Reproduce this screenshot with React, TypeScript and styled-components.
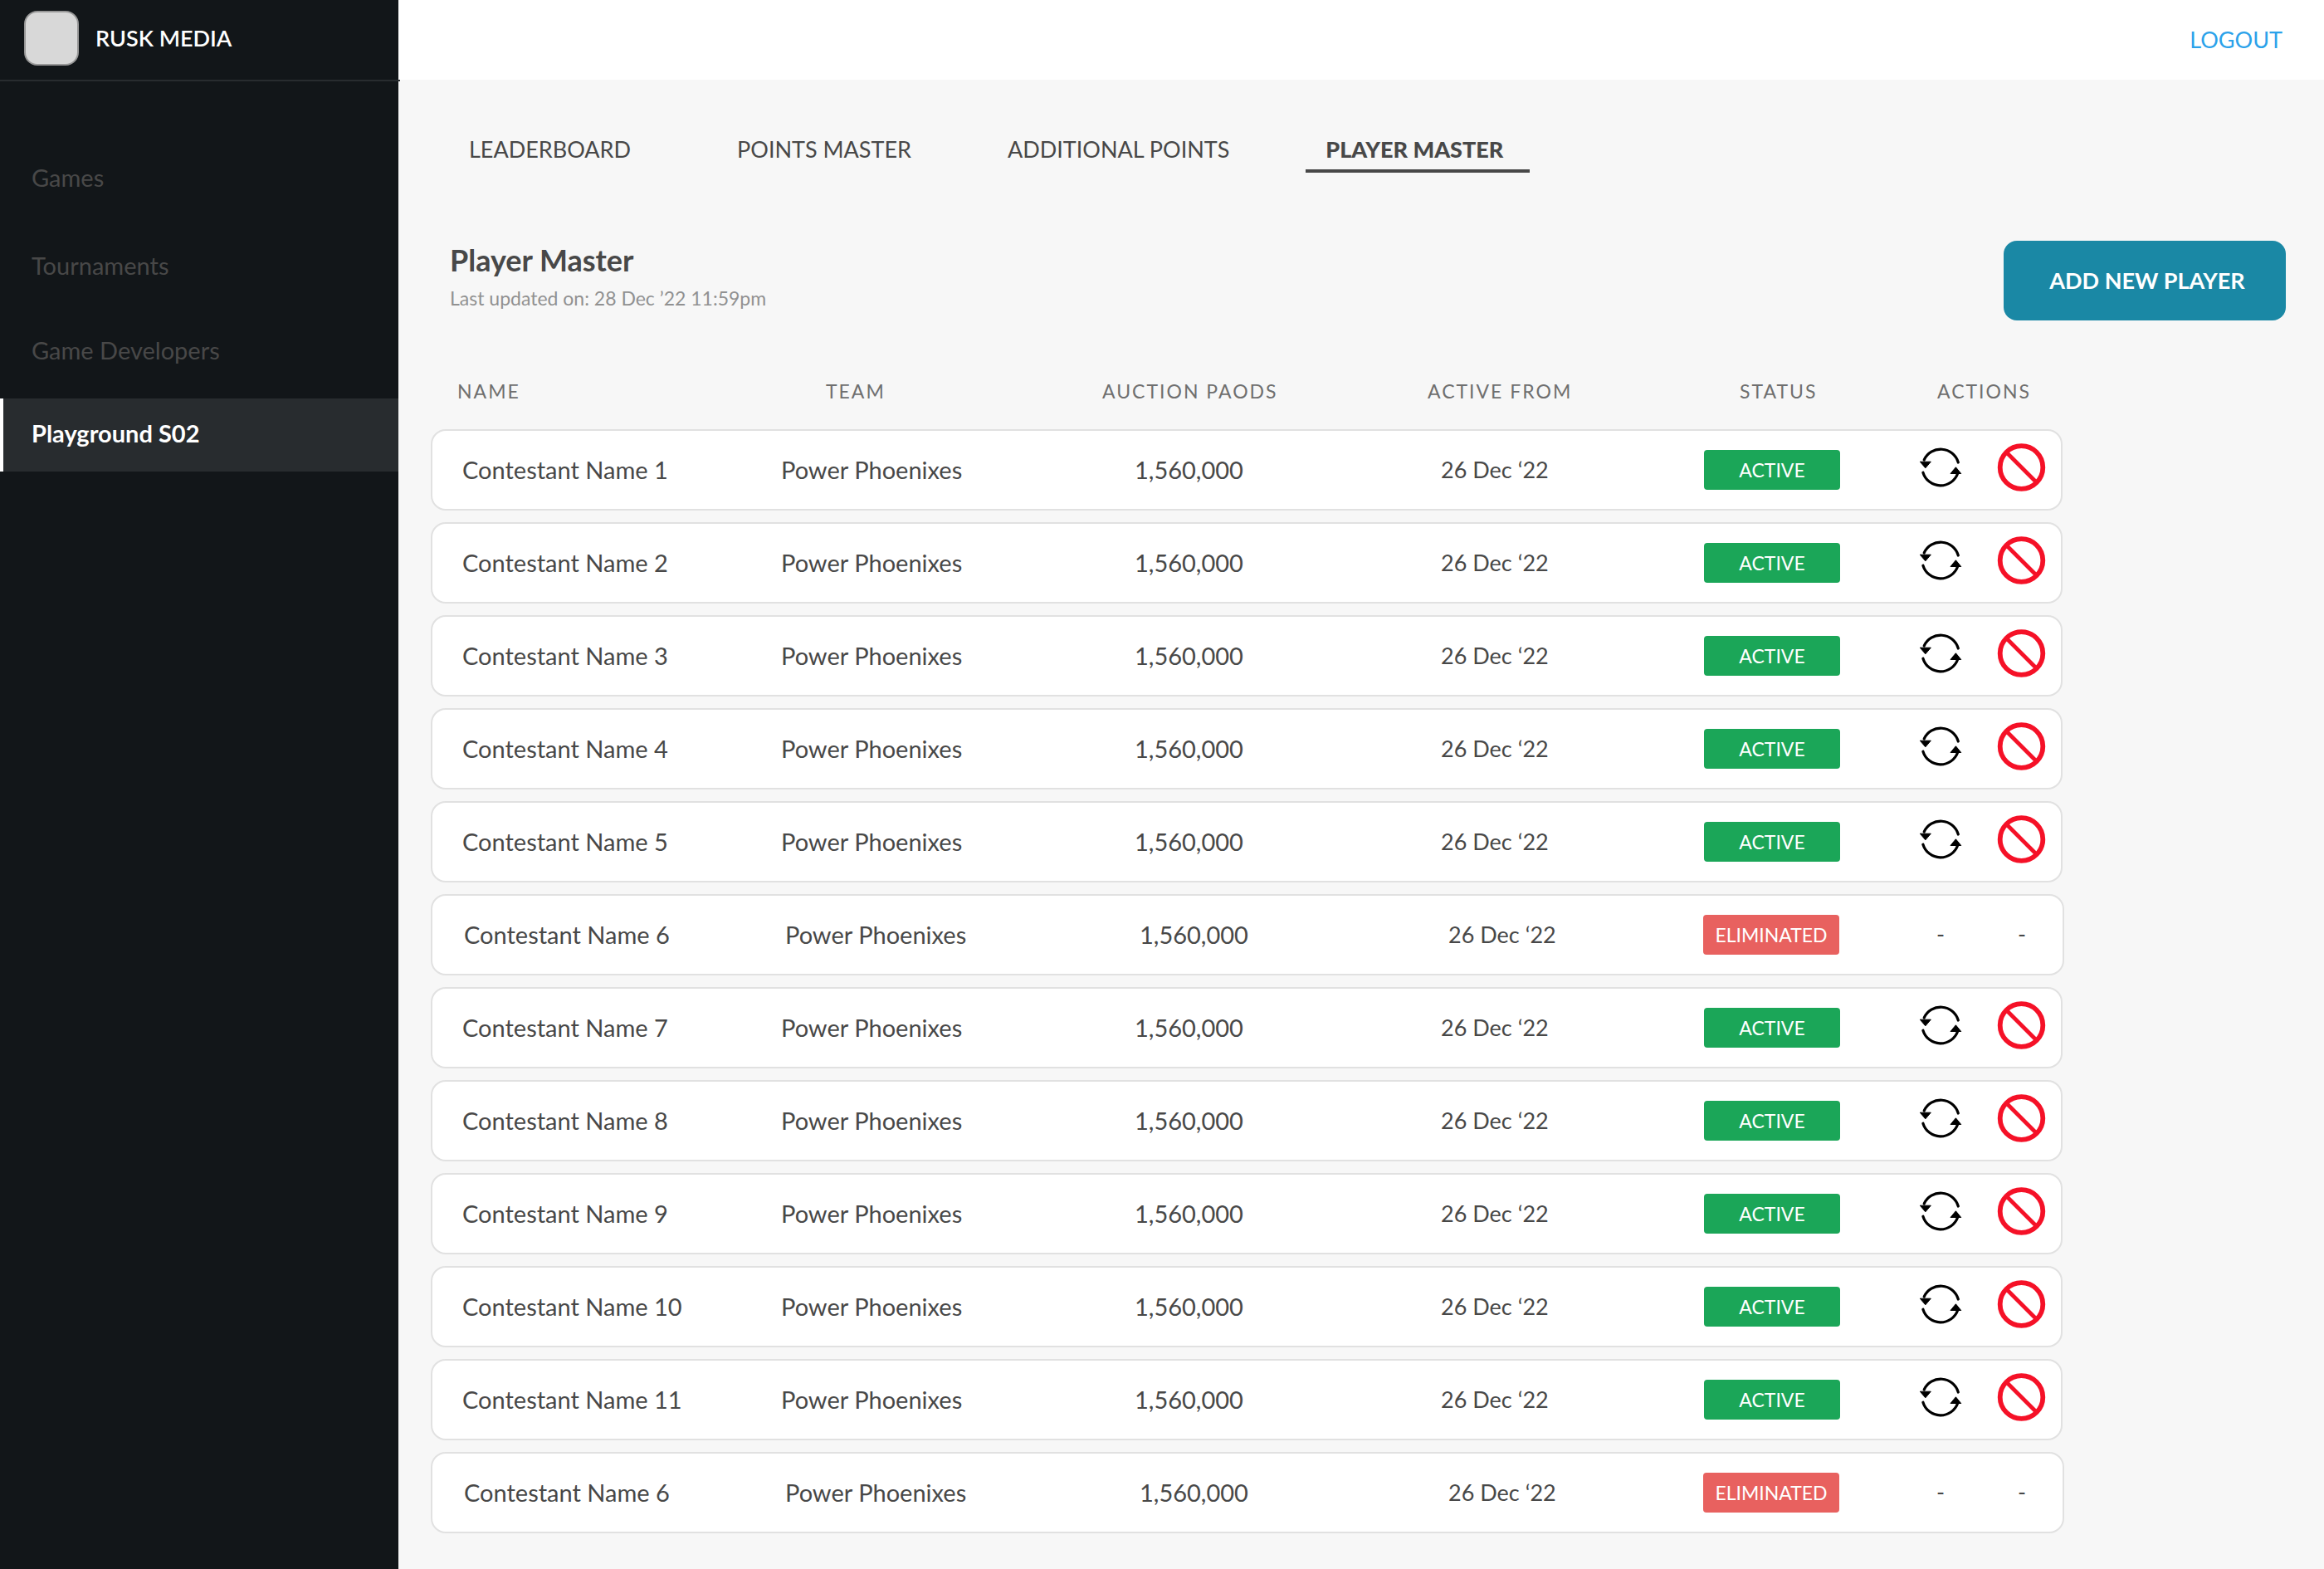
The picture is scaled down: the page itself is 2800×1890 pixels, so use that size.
import React from "react";
import styled, { createGlobalStyle } from "styled-components";

const GlobalStyle = createGlobalStyle`
  *, *::before, *::after { box-sizing: border-box; }
  body {
    margin: 0;
    background: #f7f7f7;
    color: #484848;
    font-family: Lato, "Open Sans", sans-serif;
    font-size: 27px;
    line-height: 34px;
  }
  button { font: inherit; border: 0; padding: 0; cursor: pointer; }
  a { color: inherit; text-decoration: none; }
`;

const Shell = styled.div`
  display: grid;
  grid-template-columns: 480px minmax(0, 1fr);
  min-height: 100vh;
`;

const Sidebar = styled.aside`
  background: #121619;
  color: #fff;
`;

const Brand = styled.div`
  display: flex;
  align-items: center;
  gap: 20px;
  height: 98px;
  margin-right: -2px;
  padding: 0 29px 4px;
  border-bottom: 2px solid #282c2f;
  font-weight: 600;
`;

const BrandMark = styled.span`
  width: 66px;
  height: 66px;
  border: 2px solid #979797;
  border-radius: 16px;
  background: #d8d8d8;
`;

const Nav = styled.nav`
  display: flex;
  flex-direction: column;
  padding-top: 74px;
`;

const NavLink = styled.a<{ $active?: boolean; $space: number }>`
  padding: 25px 34px 29px;
  margin-bottom: ${(p) => p.$space}px;
  border-left: 4px solid ${(p) => (p.$active ? "#fff" : "transparent")};
  background: ${(p) => (p.$active ? "#282c2f" : "transparent")};
  color: ${(p) => (p.$active ? "#fff" : "#484848")};
  font-size: 29px;
  font-weight: ${(p) => (p.$active ? 700 : 400)};
`;

const TopBar = styled.header`
  display: flex;
  align-items: center;
  justify-content: flex-end;
  height: 96px;
  padding: 0 50px;
  background: #fff;
  color: #2ba2ea;
`;

const Content = styled.main`
  padding: 56px 46px 43px 39px;
`;

const Tabs = styled.nav`
  display: flex;
  padding-left: 22px;
`;

const Tab = styled.a<{ $active?: boolean; $space: number }>`
  margin-right: ${(p) => p.$space}px;
  padding: 11px 32px 7px 24px;
  border-bottom: 4px solid ${(p) => (p.$active ? "#484848" : "transparent")};
  font-weight: ${(p) => (p.$active ? 900 : 400)};
`;

const Heading = styled.div`
  display: flex;
  justify-content: space-between;
  align-items: flex-start;
  padding: 82px 0 68px 23px;
`;

const Title = styled.h1`
  margin: 0;
  font-size: 36px;
  line-height: 46px;
  font-weight: 700;
`;

const Updated = styled.p`
  margin: 0;
  color: #919191;
  font-size: 23px;
  line-height: 46px;
`;

const AddButton = styled.button`
  width: 340px;
  height: 96px;
  padding-left: 6px;
  border-radius: 16px;
  background: #1a88a5;
  color: #fff;
  font-weight: 700;
`;

const Table = styled.table`
  display: block;
  width: 100%;
  max-width: 1968px;
`;

const TableHead = styled.thead`
  display: block;
`;

const TableBody = styled.tbody`
  display: flex;
  flex-direction: column;
  gap: 14px;
`;

const HeadRow = styled.tr`
  display: grid;
  grid-template-columns: 444fr 333fr 392fr 376fr 238fr 153fr;
  padding: 0 0 29px 32px;
`;

const HeadCell = styled.th`
  padding: 0;
  color: #6f6f6f;
  font-size: 23px;
  font-weight: 400;
  letter-spacing: 2px;
  text-align: left;
  white-space: nowrap;
`;

const PlayerRow = styled.tr<{ $out: boolean }>`
  display: grid;
  grid-template-columns: ${(p) =>
    p.$out
      ? "387fr 427fr 372fr 307fr 256fr 177fr"
      : "384fr 426fr 369fr 317fr 255fr 175fr"};
  align-items: center;
  height: 98px;
  margin-right: ${(p) => (p.$out ? 0 : 2)}px;
  padding-left: ${(p) => (p.$out ? 38 : 36)}px;
  border: 2px solid #e1e1e1;
  border-radius: 18px;
  background: #fff;
`;

const Cell = styled.td`
  padding: 0;
  white-space: nowrap;
`;

const LargeCell = styled(Cell)`
  font-size: 29px;
`;

const Badge = styled.span<{ $out: boolean }>`
  display: block;
  width: 164px;
  border-radius: 4px;
  background: ${(p) => (p.$out ? "#e8615f" : "#1ba658")};
  color: #fff;
  font-size: 23px;
  line-height: 48px;
  text-align: center;
`;

const Actions = styled.div<{ $out: boolean }>`
  display: flex;
  gap: 38px;
  padding-bottom: ${(p) => (p.$out ? 2 : 6)}px;
`;

const ActionButton = styled.button`
  width: 60px;
  height: 60px;
  background: none;
`;

const NoAction = styled.span`
  width: 60px;
  text-align: center;
`;

const Icon = styled.svg`
  display: block;
  width: 60px;
  height: 60px;
  fill: none;
`;

const SwapIcon = () => (
  <Icon viewBox="0 0 60 60" aria-hidden="true">
    <g stroke="#000" strokeWidth="3.2" strokeLinecap="round">
      <path d="M10.2 21A22 22 0 0 1 51.3 24" />
      <path d="M8.9 36.2A22 22 0 0 0 50.7 37.2" />
    </g>
    <g fill="#000" stroke="#000" strokeWidth="1" strokeLinejoin="round">
      <path d="M5.3 23.2H18.3L11.8 30.8Z" />
      <path d="M42 37.5H54.7L48.4 29.8Z" />
    </g>
  </Icon>
);

const BanIcon = () => (
  <Icon viewBox="0 0 60 60" aria-hidden="true">
    <g stroke="#f51127">
      <circle cx="29.5" cy="30" r="25.8" strokeWidth="5.8" />
      <path d="M11.5 12L47.5 48" strokeWidth="4.8" />
    </g>
  </Icon>
);

const navItems = [
  { label: "Games", space: 18 },
  { label: "Tournaments", space: 14 },
  { label: "Game Developers", space: 12 },
  { label: "Playground S02", space: 0, active: true },
];

const tabs = [
  { label: "LEADERBOARD", space: 72 },
  { label: "POINTS MASTER", space: 60 },
  { label: "ADDITIONAL POINTS", space: 60 },
  { label: "PLAYER MASTER", space: 0, active: true },
];

const columns = ["NAME", "TEAM", "AUCTION PAODS", "ACTIVE FROM", "STATUS", "ACTIONS"];

const players = [1, 2, 3, 4, 5, 6, 7, 8, 9, 10, 11, 6].map((n) => ({
  name: `Contestant Name ${n}`,
  team: "Power Phoenixes",
  pods: "1,560,000",
  from: "26 Dec ‘22",
  out: n === 6,
}));

export default function App() {
  return (
    <>
      <GlobalStyle />
      <Shell>
        <Sidebar>
          <Brand>
            <BrandMark />
            <span>RUSK MEDIA</span>
          </Brand>
          <Nav aria-label="Sections">
            {navItems.map((item) => (
              <NavLink
                key={item.label}
                href="#"
                $active={item.active}
                $space={item.space}
              >
                {item.label}
              </NavLink>
            ))}
          </Nav>
        </Sidebar>
        <div>
          <TopBar>
            <a href="#">LOGOUT</a>
          </TopBar>
          <Content>
            <Tabs aria-label="Playground">
              {tabs.map((tab) => (
                <Tab key={tab.label} href="#" $active={tab.active} $space={tab.space}>
                  {tab.label}
                </Tab>
              ))}
            </Tabs>
            <Heading>
              <div>
                <Title>Player Master</Title>
                <Updated>Last updated on: 28 Dec ’22 11:59pm</Updated>
              </div>
              <AddButton type="button">ADD NEW PLAYER</AddButton>
            </Heading>
            <Table>
              <TableHead>
                <HeadRow>
                  {columns.map((column) => (
                    <HeadCell key={column} scope="col">
                      {column}
                    </HeadCell>
                  ))}
                </HeadRow>
              </TableHead>
              <TableBody>
                {players.map((player, index) => (
                  <PlayerRow key={index} $out={player.out}>
                    <LargeCell>{player.name}</LargeCell>
                    <LargeCell>{player.team}</LargeCell>
                    <LargeCell>{player.pods}</LargeCell>
                    <Cell>{player.from}</Cell>
                    <Cell>
                      <Badge $out={player.out}>
                        {player.out ? "ELIMINATED" : "ACTIVE"}
                      </Badge>
                    </Cell>
                    <Cell>
                      <Actions $out={player.out}>
                        {player.out ? (
                          <>
                            <NoAction>-</NoAction>
                            <NoAction>-</NoAction>
                          </>
                        ) : (
                          <>
                            <ActionButton type="button" aria-label={`Swap ${player.name}`}>
                              <SwapIcon />
                            </ActionButton>
                            <ActionButton type="button" aria-label={`Ban ${player.name}`}>
                              <BanIcon />
                            </ActionButton>
                          </>
                        )}
                      </Actions>
                    </Cell>
                  </PlayerRow>
                ))}
              </TableBody>
            </Table>
          </Content>
        </div>
      </Shell>
    </>
  );
}
